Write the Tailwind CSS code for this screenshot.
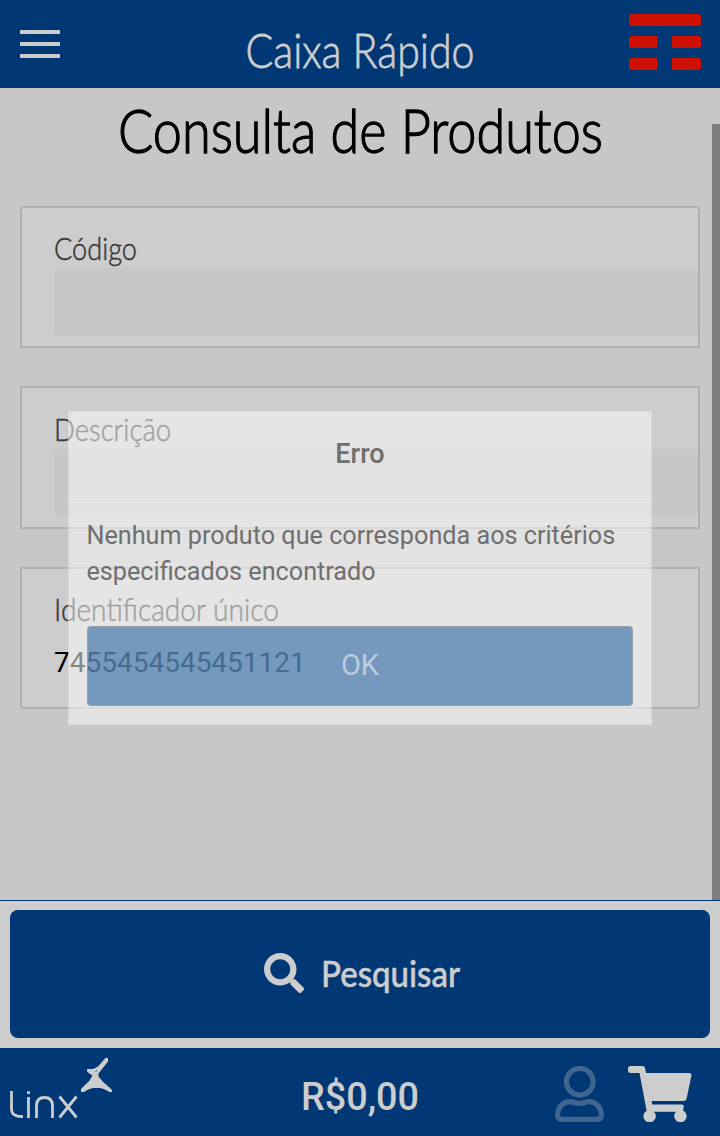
<!DOCTYPE html>
<html lang="pt-BR">
<head>
<meta charset="utf-8">
<title>Caixa Rápido</title>
<script src="https://cdn.jsdelivr.net/npm/@tailwindcss/browser@4"></script>
</head>
<body class="relative flex h-[1136px] w-[720px] flex-col overflow-hidden bg-[#c7c7c7] font-['Roboto',sans-serif]">
<header class="flex h-22 shrink-0 items-center justify-between bg-[#003876] pr-[19px] pl-5">
  <div class="flex w-[72px] flex-col gap-2">
    <i class="h-1 w-10 bg-[#cdcdcd]"></i><i class="h-1 w-10 bg-[#cdcdcd]"></i><i class="h-1 w-10 bg-[#cdcdcd]"></i>
  </div>
  <svg class="h-20 w-[240px] overflow-visible" viewBox="0 0 240 80"><text x="4.500" y="64" textLength="229" lengthAdjust="spacingAndGlyphs" class="fill-[#cdcdcd] font-['Lato',sans-serif] text-[48px] font-light" stroke="#cdcdcd" stroke-width=".8">Caixa Rápido</text></svg>
  <svg class="-mt-1 h-14 w-[72px]" viewBox="0 0 72 56" fill="#cd1000"><rect width="72" height="12" rx="2.5"/><path d="M2.500 22H28.500V34H2.500Q0 34 0 31.500V24.500Q0 22 2.500 22ZM43 22H69.500Q72 22 72 24.500V31.500Q72 34 69.500 34H43ZM2.500 44H28.500V56H2.500Q0 56 0 53.500V46.500Q0 44 2.500 44ZM43 44H69.500Q72 44 72 46.500V53.500Q72 56 69.500 56H43Z"/></svg>
</header>
<main class="relative flex h-[812px] shrink-0 flex-col px-5">
  <h1 class="h-[118px]"><svg class="h-[118px] w-full" viewBox="0 0 680 118"><text x="98" y="65" textLength="485" lengthAdjust="spacingAndGlyphs" class="fill-black font-['Lato',sans-serif] text-[61px] font-light" stroke="#000" stroke-width="1.300">Consulta de Produtos</text></svg></h1>
  <section class="h-[142px] shrink-0 rounded-t border-2 border-[#b0b0b0] bg-[#cdcdcd] pl-8">
    <svg class="block h-[60px] w-[300px]" viewBox="0 0 300 60"><text x="0" y="52" textLength="83" lengthAdjust="spacingAndGlyphs" class="fill-[#383838] font-['Lato',sans-serif] text-[32px] font-light" stroke="#383838" stroke-width=".5">Código</text></svg>
    <div class="h-[68px] rounded bg-[#c7c7c7]"></div>
  </section>
  <section class="mt-[38px] h-[143px] shrink-0 border-2 border-[#b0b0b0] bg-[#cdcdcd] pl-8">
    <svg class="block h-[61px] w-[300px]" viewBox="0 0 300 61"><text x="0" y="53" textLength="117" lengthAdjust="spacingAndGlyphs" class="fill-[#383838] font-['Lato',sans-serif] text-[32px] font-light" stroke="#383838" stroke-width=".5">Descrição</text></svg>
    <div class="h-[68px] rounded bg-[#c7c7c7]"></div>
  </section>
  <section class="mt-[38px] h-[142px] shrink-0 rounded-b border-2 border-[#b0b0b0] bg-[#cdcdcd] pl-8">
    <svg class="block h-[60px] w-[300px]" viewBox="0 0 300 60"><text x="0" y="52" textLength="225" lengthAdjust="spacingAndGlyphs" class="fill-[#383838] font-['Lato',sans-serif] text-[32px] font-light" stroke="#383838" stroke-width=".5">Identificador único</text></svg>
    <div class="flex h-[68px] items-center text-[28px] leading-8 text-black"><span class="-mt-[1px]">7455454545451121</span></div>
  </section>
  <div class="absolute top-9 right-0 h-[776px] w-2 bg-[#7d7d7d]"></div>
</main>
<div class="h-[148px] shrink-0 border-t border-[#003876] bg-[#cdcdcd] px-2.5 pt-[9px]">
  <button class="flex h-32 w-full items-center rounded-lg bg-[#003876] pl-[254px]">
    <svg class="-mt-0.5 h-10 w-10 fill-[#cdcdcd]" viewBox="0 0 512 512"><path d="M505 442.700L405.300 343c-4.500-4.500-10.600-7-17-7H372c27.600-35.300 44-79.700 44-128C416 93.100 322.900 0 208 0S0 93.100 0 208s93.100 208 208 208c48.300 0 92.700-16.400 128-44v16.300c0 6.400 2.500 12.500 7 17l99.700 99.700c9.400 9.400 24.600 9.400 33.900 0l28.300-28.300c9.400-9.400 9.400-24.600.1-34zM208 336c-70.700 0-128-57.200-128-128 0-70.700 57.200-128 128-128 70.700 0 128 57.200 128 128 0 70.700-57.200 128-128 128z"/></svg>
    <svg class="ml-4 h-16 w-40" viewBox="0 0 160 64"><text x="1" y="45" textLength="139" lengthAdjust="spacingAndGlyphs" class="fill-[#cdcdcd] font-['Lato',sans-serif] text-[36px] font-medium" stroke="#cdcdcd" stroke-width=".5">Pesquisar</text></svg>
  </button>
</div>
<footer class="flex h-22 shrink-0 items-center justify-between bg-[#003876] pr-7 pl-2">
  <svg class="h-[88px] w-[137px]" viewBox="8 1048 137 88" aria-label="linx" fill="none" stroke="#cdcdcd" stroke-width="2.800">
    <path d="M11.500 1091V1109Q11.500 1117 23 1116.500M28.500 1097V1118M36.500 1118V1106Q36.500 1097.500 44.500 1097.500T52.500 1106V1118M59.500 1096.500L76.500 1117.500M76.500 1096.500L59.500 1117.500"/><path d="M27 1091.300H30V1094H27Z" fill="#cdcdcd" stroke="none"/>
    <path d="M105.500 1058H108V1061.500L98.500 1073.500V1076.500Q103 1083 109 1087L112 1090V1092H109.500Q104 1088.500 100 1088H93Q88 1089 84 1092H81V1089L85 1085Q90 1081 92.500 1075.500L90 1074L87 1071.500V1069H93L98 1066.500Z" fill="#cdcdcd" stroke="none"/><path d="M95.500 1071.500L97 1070.500" stroke="#003876" stroke-width="1"/>
  </svg>
  <svg class="ml-2.5 h-[70px] w-[130px] overflow-visible pt-1" viewBox="0 0 130 64"><text x="11" y="47.500" textLength="118" lengthAdjust="spacingAndGlyphs" class="fill-[#cdcdcd] font-['Roboto',sans-serif] text-[39px] font-medium">R$0,00</text></svg>
  <div class="mt-1 flex items-center gap-6">
    <svg class="h-14 w-[49px]" viewBox="0 0 49 56" fill="none" stroke="#406690" stroke-width="5.200"><circle cx="24.800" cy="15.800" r="13.300"/><path d="M7 53.400H42.500Q46.400 53.400 46.400 49.500C46.400 41 41 35.700 34 35.700C30.500 35.700 29 37.400 24.500 37.400S18.500 35.700 15 35.700C8 35.700 2.600 41 2.600 49.500Q2.600 53.400 7 53.400Z"/></svg>
    <svg class="h-14 w-16" viewBox="0 0 64 56" fill="#cdcdcd"><path d="M2.700 0H14.500Q16.700 0 17.100 2.200L18 7H61.300Q64 7 63.400 9.700L58.600 32.700Q58 35 55.800 35H23.600L24.300 38.500H53.500Q56.300 38.500 55.800 41L55 44.500A6.200 6.200 0 1 1 48 45.700H26A6.200 6.200 0 1 1 18.600 44.700L11.500 7H2.700Q0 7 0 4.500V2.500Q0 0 2.700 0Z"/></svg>
  </div>
</footer>
<div class="absolute top-[411px] left-[68px] flex h-[314px] w-[584px] flex-col border border-[#b8b8b8]/20 bg-[#fafafa]/54 text-[#6f6f6f]" role="dialog">
  <h2 class="flex h-[88px] shrink-0 items-center justify-center border-b-2 border-white/20 text-[27px] font-medium"><span class="-mt-[1px]">Erro</span></h2>
  <p class="h-[126px] shrink-0 px-[17.500px] pt-[18px] text-[25.200px] leading-9 whitespace-nowrap">Nenhum produto que corresponda aos critérios<br>especificados encontrado</p>
  <button class="mx-[18px] h-20 rounded border border-[#a0a0a0]/80 bg-[#054d95]/50 text-[29px] text-[#b9cde1]">OK</button>
</div>
</body>
</html>
